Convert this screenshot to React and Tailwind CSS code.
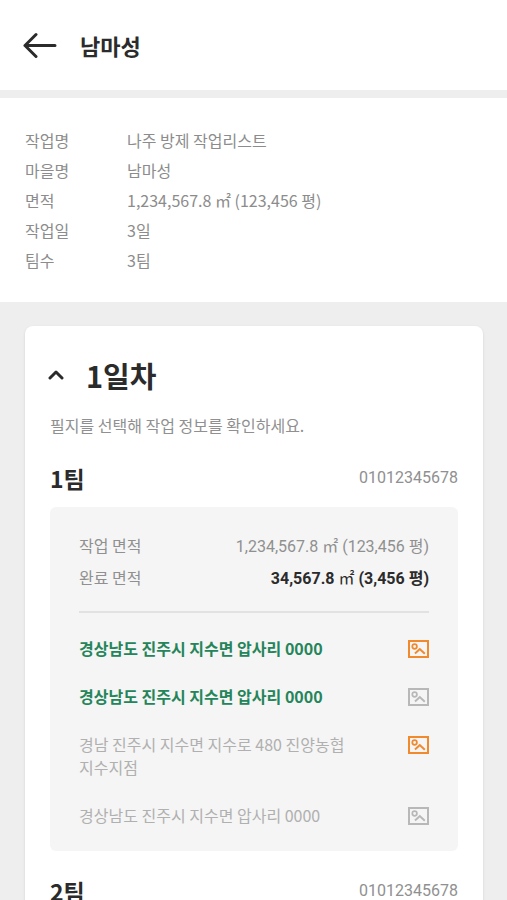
import { useState } from 'react';

const info = [
  { label: '작업명', value: '나주 방제 작업리스트' },
  { label: '마을명', value: '남마성' },
  { label: '면적', value: '1,234,567.8 ㎡ (123,456 평)' },
  { label: '작업일', value: '3일' },
  { label: '팀수', value: '3팀' },
];

const parcels = [
  { id: 1, address: '경상남도 진주시 지수면 압사리 0000', done: true, photo: true },
  { id: 2, address: '경상남도 진주시 지수면 압사리 0000', done: true, photo: false },
  { id: 3, address: '경남 진주시 지수면 지수로 480 진양농협 지수지점', done: false, photo: true },
  { id: 4, address: '경상남도 진주시 지수면 압사리 0000', done: false, photo: false },
];

const teams = [
  { id: 1, name: '1팀', phone: '01012345678' },
  { id: 2, name: '2팀', phone: '01012345678' },
];

function PhotoIcon({ active }) {
  return (
    <svg
      width="21"
      height="18"
      viewBox="0 0 21 18"
      fill="none"
      stroke="currentColor"
      strokeWidth="2"
      className={active ? 'text-[#f08a2c]' : 'text-[#b8b8b8]'}
      aria-hidden="true"
    >
      <rect x="1" y="1" width="19" height="16" />
      <circle cx="6.6" cy="6.5" r="2.3" strokeWidth="1.7" />
      <path d="M7 13.4 11.8 9 16.8 13.8" />
    </svg>
  );
}

function Team({ team }) {
  return (
    <section className="mb-6">
      <div className="mb-[13px] flex items-center justify-between">
        <h3 className="text-[23px] leading-8 font-bold text-[#2b2b2b]">{team.name}</h3>
        <a href={`tel:${team.phone}`} className="font-['Roboto','Noto_Sans_CJK_KR',sans-serif] text-base text-[#909090]">
          {team.phone}
        </a>
      </div>

      <div className="rounded-md bg-[#f5f5f5] px-[29px] pt-[22px] pb-6">
        {/* 면적 요약 */}
        <dl className="border-b-2 border-[#e2e2e2] pb-[18px] leading-8">
          <div className="flex h-8 items-baseline justify-between">
            <dt className="text-[#909090]">작업 면적</dt>
            <dd className="font-['Roboto','Noto_Sans_CJK_KR',sans-serif] text-[#909090]">1,234,567.8 ㎡ (123,456 평)</dd>
          </div>
          <div className="flex h-8 items-baseline justify-between">
            <dt className="text-[#909090]">완료 면적</dt>
            <dd className="font-['Roboto','Noto_Sans_CJK_KR',sans-serif] font-bold text-[#2b2b2b]">
              34,567.8 <span className="font-normal">㎡</span> (3,456 평)
            </dd>
          </div>
        </dl>

        {/* 필지 목록 */}
        <ul className="space-y-[25px] pt-6">
          {parcels.map((parcel) => (
            <li key={parcel.id} className="flex items-start justify-between">
              <button
                className={`max-w-[280px] text-left leading-[23px] break-keep ${
                  parcel.done ? 'font-bold text-[#25855a]' : 'text-[#b0b0b0]'
                }`}
              >
                {parcel.address}
              </button>
              <button className="flex h-[23px] items-center" aria-label="사진">
                <PhotoIcon active={parcel.photo} />
              </button>
            </li>
          ))}
        </ul>
      </div>
    </section>
  );
}

export default function App() {
  const [open, setOpen] = useState(true);

  return (
    <div className="min-h-screen bg-[#eeeeee] font-['Noto_Sans_CJK_KR',sans-serif] text-base">
      <header className="mb-2 flex h-[90px] items-center gap-[23px] bg-white px-[23px]">
        <button aria-label="뒤로" className="text-[#2b2b2b]">
          <svg
            width="34"
            height="26"
            viewBox="0 0 34 26"
            fill="none"
            stroke="currentColor"
            strokeWidth="3"
            strokeLinecap="round"
            strokeLinejoin="round"
          >
            <path d="M32 13.5H2M13 2.5 2 13.5l11 11" />
          </svg>
        </button>
        <h1 className="text-[22px] font-bold text-[#2b2b2b]">남마성</h1>
      </header>

      <dl className="bg-white px-[25px] py-[27px] leading-[30px] text-[#8c8c8c]">
        {info.map((row) => (
          <div key={row.label} className="flex">
            <dt className="w-[102px]">{row.label}</dt>
            <dd>{row.value}</dd>
          </div>
        ))}
      </dl>

      <main className="py-6 pr-6 pl-[25px]">
        <div className="rounded-lg bg-white px-[25px] pt-[26px] pb-2 shadow">
          <div className="flex items-center gap-[22px]">
            <button
              aria-label="접기"
              aria-expanded={open}
              onClick={() => setOpen(!open)}
              className="-ml-0.5 text-[#2b2b2b]"
            >
              <svg
                width="16"
                height="10"
                viewBox="0 0 16 10"
                fill="none"
                stroke="currentColor"
                strokeWidth="3"
                strokeLinecap="round"
                strokeLinejoin="round"
                className={open ? '' : 'rotate-180'}
              >
                <path d="M2 8 8 2l6 6" />
              </svg>
            </button>
            <h2 className="text-[29px] leading-[46px] font-bold text-[#2b2b2b]">1일차</h2>
          </div>

          {open && (
            <>
              <p className="mt-[15px] mb-[25px] text-[#909090]">필지를 선택해 작업 정보를 확인하세요.</p>
              {teams.map((team) => (
                <Team key={team.id} team={team} />
              ))}
            </>
          )}
        </div>
      </main>
    </div>
  );
}
